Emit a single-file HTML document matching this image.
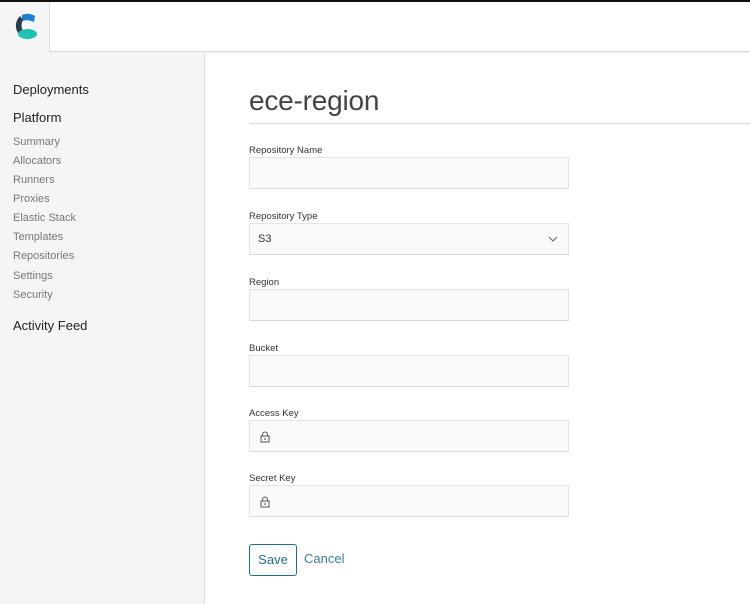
<!DOCTYPE html>
<html><head><meta charset="utf-8"><style>
*{margin:0;padding:0;box-sizing:border-box}
body{width:750px;height:604px;overflow:hidden;font-family:"Liberation Sans",sans-serif;background:#fff;position:relative}
.top{position:absolute;left:0;top:0;width:750px;height:2px;background:#111}
.hdr{position:absolute;left:0;top:2px;width:750px;height:50px;border-bottom:1px solid #d6d6d6;box-shadow:0 1px 2px rgba(0,0,0,.06)}
.logo{position:absolute;left:0;top:2px;width:50px;height:50px;background:#f5f5f5;border-right:1px solid #ddd}
.side{position:absolute;left:0;top:53px;width:205px;height:551px;background:#f5f5f5;border-right:1px solid #dcdcdc}
.h{position:absolute;left:13px;font-size:13px;color:#222}
.l{position:absolute;left:13px;font-size:11px;color:#777}
.title{position:absolute;left:249px;top:85px;font-size:28px;font-weight:300;color:#444;letter-spacing:-.2px}
.rule{position:absolute;left:249px;top:123px;width:501px;height:1px;background:#d8d8d8}
.lab{position:absolute;left:249px;font-size:9.5px;color:#333}
.in{position:absolute;left:249px;width:320px;height:32px;background:#fafafa;border:1px solid #e4e4e4;border-bottom-color:#d8d8d8}
.lock{position:absolute;left:10px;top:10px}
.btn{position:absolute;left:249px;top:544px;width:48px;height:32px;border:1px solid #1f6e8c;border-radius:3px;color:#1f6e8c;font-size:13px;text-align:center;line-height:30px}
.cancel{position:absolute;left:304px;top:551px;font-size:13px;color:#3a7f9c}
</style></head><body>
<div class="top"></div>
<div class="hdr"></div>
<div class="logo">
<svg width="50" height="50" viewBox="0 0 50 50" style="position:absolute;left:0;top:0">
<path d="M22 13 Q28 10 35 14 L34 20 Q28 17 22 19 Z" fill="#1a7fd6"/>
<path d="M20 14 Q15 19 16 26 Q17 31 21 34 L23 29 Q20 23 23 18 Z" fill="#2b3a4a"/>
<ellipse cx="27.5" cy="32" rx="9.5" ry="5" fill="#1ec2b0"/>
</svg>
</div>
<div class="side">
<div class="h" style="top:29px">Deployments</div>
<div class="h" style="top:57px">Platform</div>
<div class="l" style="top:83px">Summary</div>
<div class="l" style="top:102px">Allocators</div>
<div class="l" style="top:121px">Runners</div>
<div class="l" style="top:140px">Proxies</div>
<div class="l" style="top:159px">Elastic Stack</div>
<div class="l" style="top:178px">Templates</div>
<div class="l" style="top:197px">Repositories</div>
<div class="l" style="top:217px">Settings</div>
<div class="l" style="top:236px">Security</div>
<div class="h" style="top:265px">Activity Feed</div>
</div>
<div class="title">ece-region</div>
<div class="rule"></div>
<div class="lab" style="top:145px">Repository Name</div>
<div class="in" style="top:157px"></div>
<div class="lab" style="top:211px">Repository Type</div>
<div class="in" style="top:223px"><span style="position:absolute;left:8px;top:9px;font-size:11px;color:#333">S3</span>
<svg style="position:absolute;right:10px;top:12px" width="10" height="7" viewBox="0 0 10 7"><path d="M1 1 L5 5 L9 1" fill="none" stroke="#666" stroke-width="1"/></svg></div>
<div class="lab" style="top:277px">Region</div>
<div class="in" style="top:289px"></div>
<div class="lab" style="top:343px">Bucket</div>
<div class="in" style="top:355px"></div>
<div class="lab" style="top:408px">Access Key</div>
<div class="in" style="top:420px"><svg class="lock" width="10" height="12" viewBox="0 0 10 12"><path d="M2.5 5 V3.5 A2.5 2.5 0 0 1 7.5 3.5 V5" fill="none" stroke="#555"/><rect x="1" y="5" width="8" height="6" fill="none" stroke="#555"/><circle cx="5" cy="8" r="0.9" fill="#555"/></svg></div>
<div class="lab" style="top:473px">Secret Key</div>
<div class="in" style="top:485px"><svg class="lock" width="10" height="12" viewBox="0 0 10 12"><path d="M2.5 5 V3.5 A2.5 2.5 0 0 1 7.5 3.5 V5" fill="none" stroke="#555"/><rect x="1" y="5" width="8" height="6" fill="none" stroke="#555"/><circle cx="5" cy="8" r="0.9" fill="#555"/></svg></div>
<div class="btn">Save</div>
<div class="cancel">Cancel</div>
</body></html>
